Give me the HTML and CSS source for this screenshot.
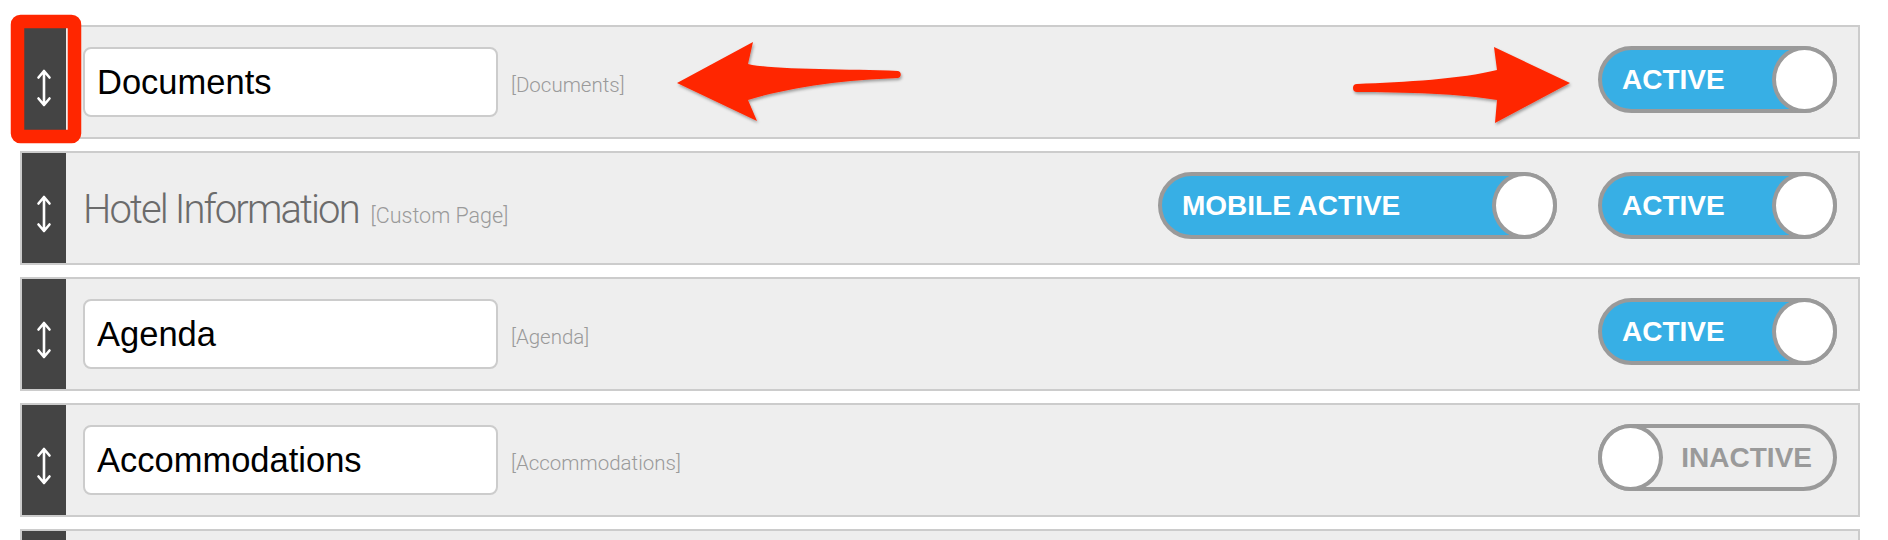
FILE: index.html
```html
<!DOCTYPE html>
<html lang="en">
<head>
<meta charset="utf-8">
<title>Menu items</title>
<link rel="stylesheet" href="styles.css">
</head>
<body>
<div class="page">
  <div class="list">
    <div class="row">
      <div class="handle"><svg class="move" viewBox="0 0 16 40" width="16" height="40"><path d="M8 3V37M2.5 9.5L8 3L13.5 9.5M2.5 30.5L8 37L13.5 30.5" fill="none" stroke="#fff" stroke-width="2.6" stroke-linecap="round" stroke-linejoin="round"/></svg></div>
      <input class="name" type="text" value="Documents">
      <span class="label">[Documents]</span>
      <div class="toggles">
        <div class="toggle on"><span class="toggle-text">ACTIVE</span><span class="knob"></span></div>
      </div>
    </div>
    <div class="row">
      <div class="handle"><svg class="move" viewBox="0 0 16 40" width="16" height="40"><path d="M8 3V37M2.5 9.5L8 3L13.5 9.5M2.5 30.5L8 37L13.5 30.5" fill="none" stroke="#fff" stroke-width="2.6" stroke-linecap="round" stroke-linejoin="round"/></svg></div>
      <div class="title">Hotel Information <span class="label inline">[Custom Page]</span></div>
      <div class="toggles">
        <div class="toggle on wide"><span class="toggle-text">MOBILE ACTIVE</span><span class="knob"></span></div>
        <div class="toggle on"><span class="toggle-text">ACTIVE</span><span class="knob"></span></div>
      </div>
    </div>
    <div class="row">
      <div class="handle"><svg class="move" viewBox="0 0 16 40" width="16" height="40"><path d="M8 3V37M2.5 9.5L8 3L13.5 9.5M2.5 30.5L8 37L13.5 30.5" fill="none" stroke="#fff" stroke-width="2.6" stroke-linecap="round" stroke-linejoin="round"/></svg></div>
      <input class="name" type="text" value="Agenda">
      <span class="label">[Agenda]</span>
      <div class="toggles">
        <div class="toggle on"><span class="toggle-text">ACTIVE</span><span class="knob"></span></div>
      </div>
    </div>
    <div class="row">
      <div class="handle"><svg class="move" viewBox="0 0 16 40" width="16" height="40"><path d="M8 3V37M2.5 9.5L8 3L13.5 9.5M2.5 30.5L8 37L13.5 30.5" fill="none" stroke="#fff" stroke-width="2.6" stroke-linecap="round" stroke-linejoin="round"/></svg></div>
      <input class="name" type="text" value="Accommodations">
      <span class="label">[Accommodations]</span>
      <div class="toggles">
        <div class="toggle off"><span class="knob"></span><span class="toggle-text">INACTIVE</span></div>
      </div>
    </div>
    <div class="row">
      <div class="handle"><svg class="move" viewBox="0 0 16 40" width="16" height="40"><path d="M8 3V37M2.5 9.5L8 3L13.5 9.5M2.5 30.5L8 37L13.5 30.5" fill="none" stroke="#fff" stroke-width="2.6" stroke-linecap="round" stroke-linejoin="round"/></svg></div>
    </div>
  </div>

  <svg class="annotations" width="1888" height="540" viewBox="0 0 1888 540">
    <defs>
      <filter id="shadow" x="-10%" y="-20%" width="130%" height="150%">
        <feDropShadow dx="1" dy="2" stdDeviation="1.5" flood-color="#000" flood-opacity="0.35"/>
      </filter>
    </defs>
    <rect x="17.5" y="21.5" width="57" height="115" rx="3" ry="3" fill="none" stroke="#ff2600" stroke-width="13.5"/>
    <path filter="url(#shadow)" fill="#ff2600" d="M677 83 L753 42 L748 64 C772 70 845 69 898 71 A3.6 3.6 0 0 1 898 78 C845 80 790 87 748 100 L757 121 Z"/>
    <path filter="url(#shadow)" fill="#ff2600" d="M1357 84 C1405 82 1462 79 1497 70 L1494 47 L1570 83 L1495 123 L1497 100 C1462 94 1405 92 1357 92 A4 4 0 0 1 1357 84 Z"/>
  </svg>
</div>
</body>
</html>
```

FILE: styles.css
```css
html, body {
  margin: 0;
  padding: 0;
  background: #ffffff;
}

.page {
  position: relative;
  width: 1888px;
  height: 540px;
  overflow: hidden;
  font-family: "Liberation Sans", Arial, sans-serif;
}

.list {
  padding: 25px 0 0 20px;
  width: 1840px;
}

.row {
  display: flex;
  align-items: center;
  box-sizing: border-box;
  height: 114px;
  margin-bottom: 12px;
  border: 2px solid #cccccc;
  background: #eeeeee;
}

.handle {
  align-self: stretch;
  flex: none;
  width: 44px;
  box-sizing: border-box;
  padding-top: 12px;
  background: #444444;
  display: flex;
  align-items: center;
  justify-content: center;
}

.move {
  display: block;
}

.name {
  flex: none;
  box-sizing: border-box;
  width: 415px;
  height: 70px;
  margin: 0 0 0 17px;
  padding: 0 0 0 12px;
  border: 2px solid #cccccc;
  border-radius: 8px;
  background: #ffffff;
  color: #000000;
  font-family: "Liberation Sans", Arial, sans-serif;
  font-size: 34.5px;
  outline: none;
}

.label {
  margin: 6px 0 0 13px;
  font-family: Roboto, "Liberation Sans", sans-serif;
  font-weight: 300;
  font-size: 20.5px;
  letter-spacing: 0;
  color: #9a9a9a;
}

.label.inline {
  margin: 0 0 0 4px;
  font-size: 21.5px;
}

.title {
  margin: 2px 0 0 17px;
  font-family: Roboto, "Liberation Sans", sans-serif;
  font-weight: 300;
  font-size: 40px;
  letter-spacing: -1.9px;
  color: #6b6b6b;
  white-space: nowrap;
}

.toggles {
  margin-left: auto;
  margin-right: 21px;
  margin-bottom: 5px;
  display: flex;
  gap: 41px;
}

.toggle {
  position: relative;
  box-sizing: border-box;
  width: 239px;
  height: 67px;
  border: 4px solid #9a9a9a;
  border-radius: 34px;
  display: flex;
  align-items: center;
  font-family: "Liberation Sans", Arial, sans-serif;
  font-weight: bold;
  font-size: 28px;
}

.toggle.wide {
  width: 399px;
}

.toggle.on {
  background: #37afe5;
  color: #ffffff;
  padding-left: 20px;
}

.toggle.off {
  background: #eeeeee;
  color: #9a9a9a;
  justify-content: flex-end;
  padding-right: 21px;
}

.knob {
  position: absolute;
  top: -4px;
  width: 65px;
  height: 67px;
  box-sizing: border-box;
  border: 4px solid #9a9a9a;
  border-radius: 50%;
  background: #ffffff;
}

.toggle.on .knob {
  right: -4px;
}

.toggle.off .knob {
  left: -4px;
}

.annotations {
  position: absolute;
  top: 0;
  left: 0;
  pointer-events: none;
}
```
